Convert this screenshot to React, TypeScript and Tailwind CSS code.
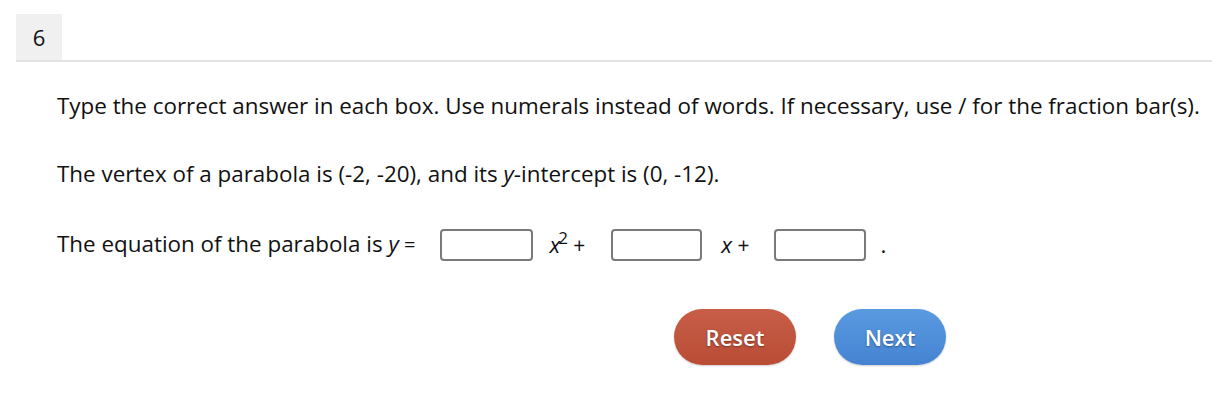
import React from 'react';

const AnswerBox = ({ width }: { width: string }) => (
  <input
    type="text"
    className={`${width} h-[32px] rounded-[4px] border-2 border-[#7a7a7a] bg-white outline-none`}
  />
);

export default function App() {
  return (
    <div className="min-h-[414px] bg-white text-[#111] font-['Open_Sans',sans-serif]">
      {/* Question number */}
      <div className="pl-4 pt-[14px]">
        <div className="flex items-end border-b-2 border-[#e3e3e3]">
          <div className="w-[46px] h-[46px] bg-[#f0f0f0] flex items-center justify-center text-[22px]">6</div>
        </div>
      </div>

      <div className="pl-[57px] pt-[28px] text-[22.4px] leading-[32px]">
        <p>
          Type the correct answer in each box. Use numerals instead of words. If necessary, use / for the fraction bar(s).
        </p>
        <p className="mt-[36px]">
          The vertex of a parabola is (-2, -20), and its <i>y</i>-intercept is (0, -12).
        </p>

        <div className="mt-[38px] flex items-center">
          <span>
            The equation of the parabola is <i>y</i>
            <span className="text-[20px]"> =</span>
          </span>
          <span className="ml-[25px] flex">
            <AnswerBox width="w-[93px]" />
          </span>
          <span className="ml-[16px]">
            <i>x</i>
            <sup className="text-[17px] -ml-[2px]">2</sup>
            <span className="text-[21px]">&nbsp;+</span>
          </span>
          <span className="ml-[26px] flex">
            <AnswerBox width="w-[91px]" />
          </span>
          <span className="ml-[19px] text-[21px]">
            <i className="text-[22.4px]">x</i>&nbsp;+
          </span>
          <span className="ml-[24px] flex">
            <AnswerBox width="w-[92px]" />
          </span>
          <span className="ml-[15px]">.</span>
        </div>

        <div className="mt-[48px] flex pl-[617px] gap-[38px]">
          <button className="w-[122px] h-[56px] rounded-full bg-gradient-to-b from-[#c95e48] to-[#b84c35] text-white text-[22px] font-semibold [text-shadow:0_1px_2px_rgba(0,0,0,0.4)] shadow-[0_1px_2px_rgba(0,0,0,0.2)]">
            Reset
          </button>
          <button className="w-[112px] h-[56px] rounded-full bg-gradient-to-b from-[#5a9ae0] to-[#4583d2] text-white text-[22px] font-semibold [text-shadow:0_1px_2px_rgba(0,0,0,0.4)] shadow-[0_1px_2px_rgba(0,0,0,0.2)]">
            Next
          </button>
        </div>
      </div>
    </div>
  );
}
